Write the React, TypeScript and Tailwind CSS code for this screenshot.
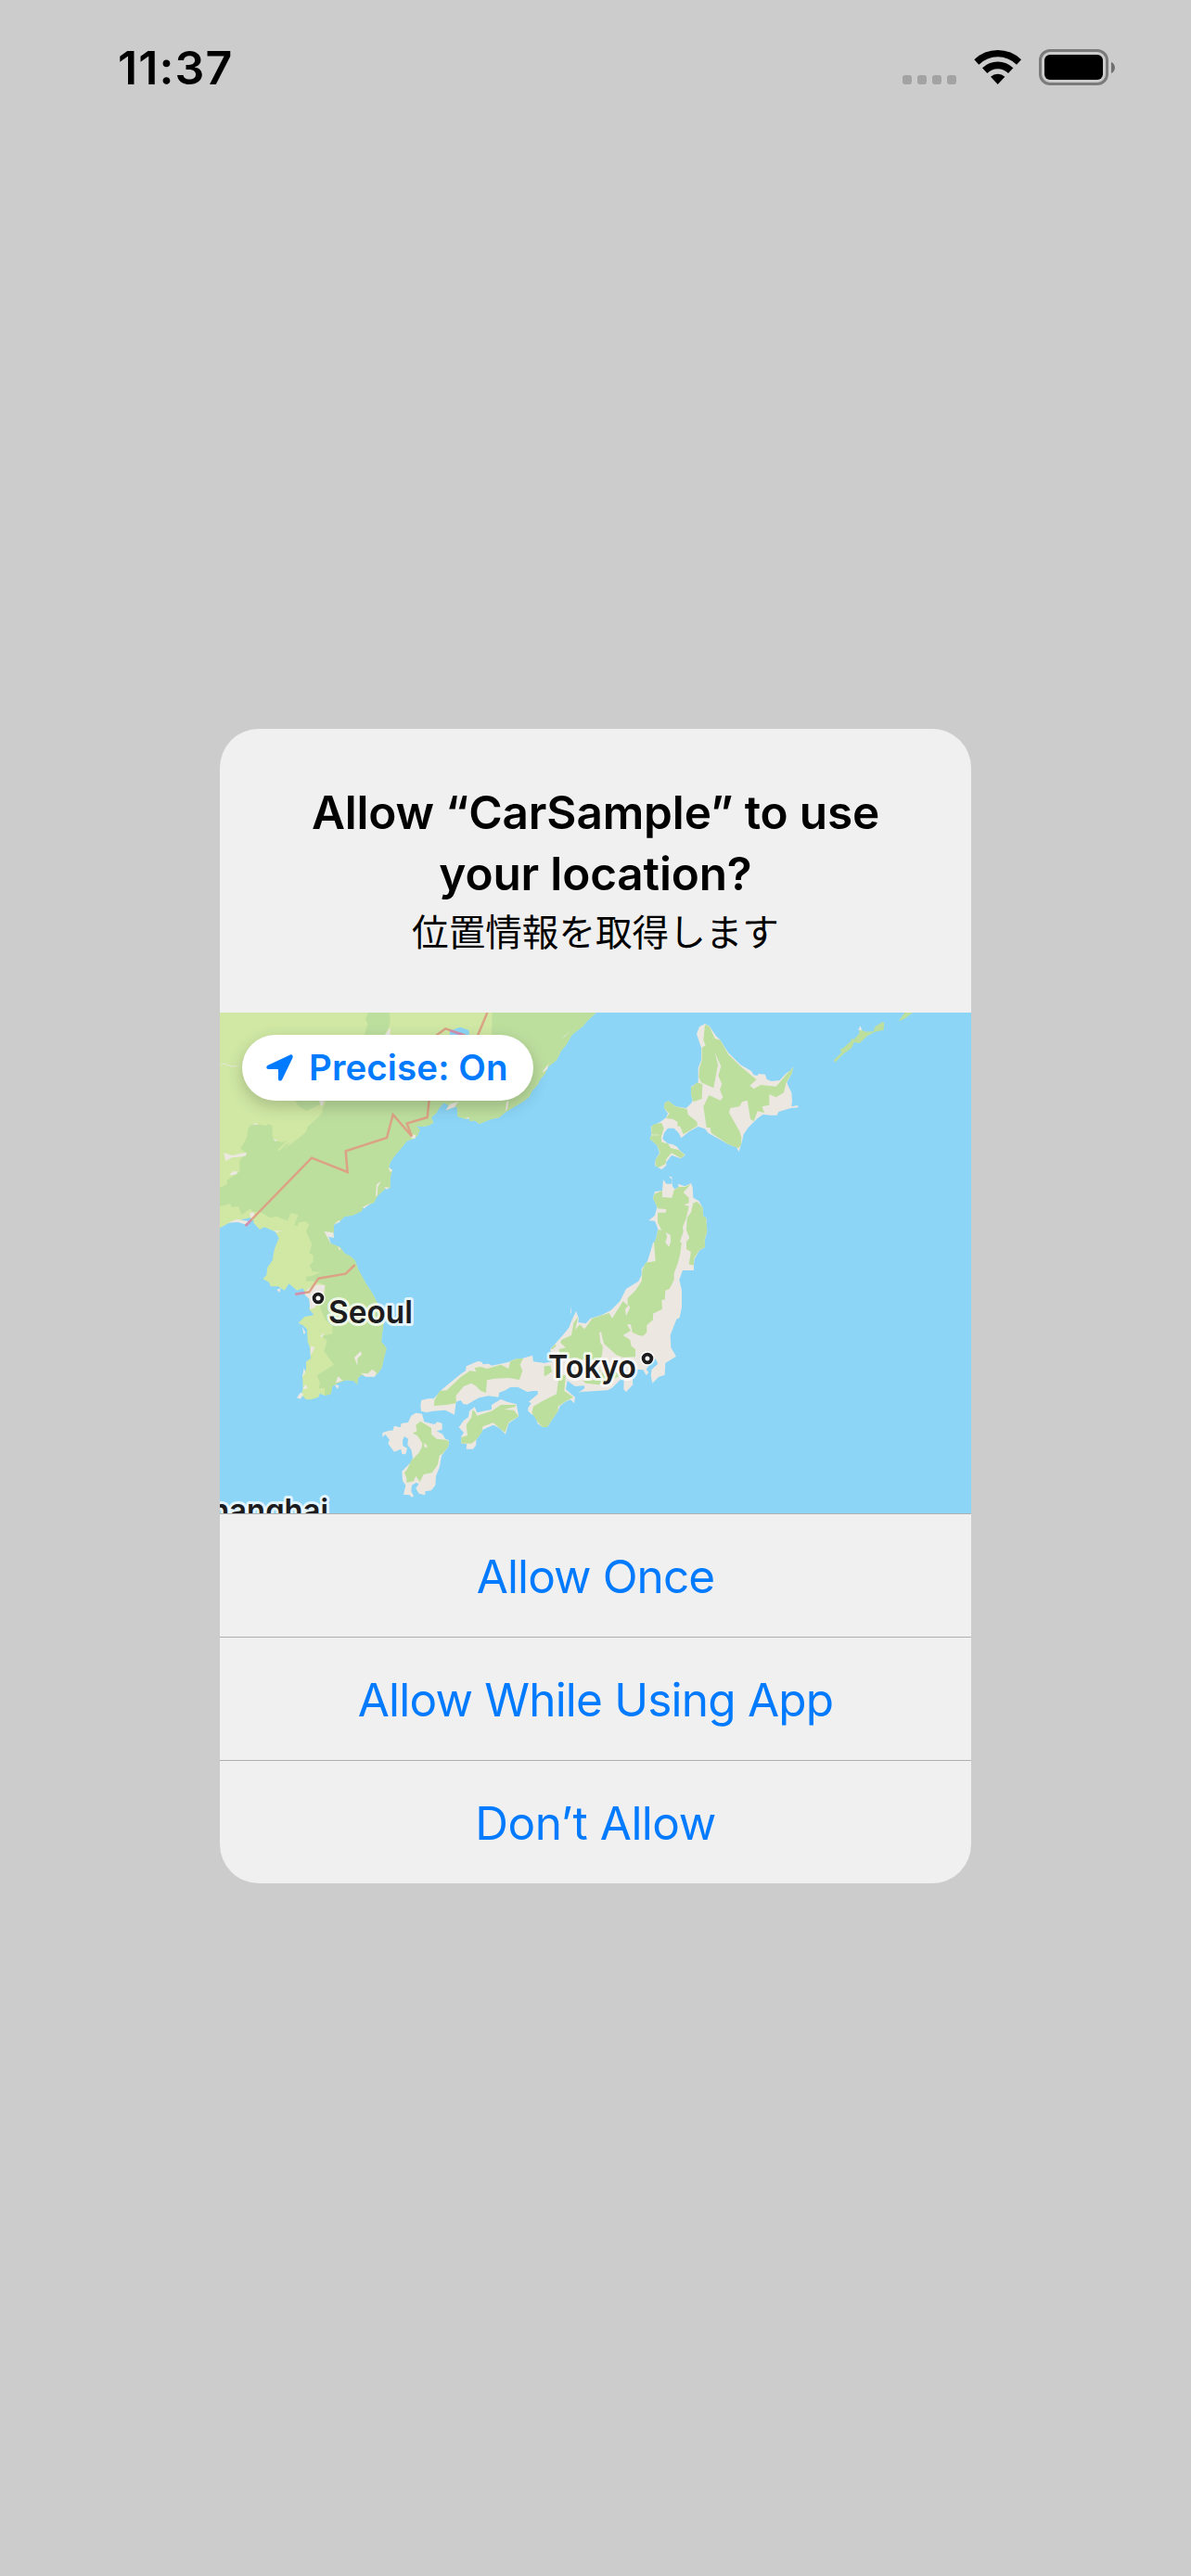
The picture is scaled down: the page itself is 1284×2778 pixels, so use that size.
import React from "react";

const INTER = "font-['Inter','Noto_Sans_CJK_JP',sans-serif]";

const FOREST = "#bddf9e";
const GRASS = "#d0e8a4";
const SAND = "#ece8e1";
const WATER = "#8cd5f7";
const BORDER = "#dba285";

function P({ d, fill }: { d: string; fill: string }) {
  return <polygon points={d} fill={fill} />;
}

function Continent() {
  return (
    <g transform="translate(230 1080) scale(0.33333)">
      <P
        fill={GRASS}
        d="0,30 1238,30 1238,36 1210,62 1195,80 1160,108 1140,142 1125,160 1110,190 1082,212 1072,235 1055,255 1050,268 1030,290 1022,308 1000,325 975,340 945,358 925,375 895,382 860,396 845,385 830,388 828,377 815,380 790,372 788,340 770,345 755,352 760,335 745,328 730,345 722,360 705,375 712,392 695,402 672,405 655,402 668,415 660,435 648,443 625,452 610,472 590,495 575,515 567,535 578,547 572,570 572,602 555,607 530,630 520,650 485,665 480,678 450,692 425,695 410,710 390,722 388,760 362,745 378,782 410,795 425,815 445,826 458,838 470,870 495,915 515,945 530,975 552,1010 550,1045 543,1100 560,1122 550,1160 545,1185 530,1205 520,1213 495,1213 478,1208 468,1218 465,1240 455,1228 430,1225 400,1235 385,1245 380,1270 360,1275 345,1268 340,1280 315,1288 300,1288 285,1272 290,1250 288,1210 300,1190 300,1165 315,1155 312,1120 305,1100 303,1060 290,1048 275,1040 295,1020 325,1015 310,995 315,970 300,950 290,928 270,935 245,913 230,935 210,922 185,922 180,908 160,898 172,885 175,860 193,835 192,830 198,800 212,765 200,745 165,730 150,738 120,705 90,712 60,712 21,733 0,733"
      />
      <P
        fill={FOREST}
        d="0,606 21,602 45,592 44,578 85,550 85,515 105,490 88,475 100,455 108,440 113,410 125,396 150,398 170,402 178,396 190,402 192,440 207,452 225,455 240,448 208,480 214,483 235,462 250,455 228,478 262,453 300,422 305,405 342,372 352,360 353,345 365,325 365,300 500,250 900,120 902,36 1238,36 1210,62 1195,80 1160,108 1140,142 1125,160 1110,190 1082,212 1072,235 1055,255 1050,268 1030,290 1022,308 1000,325 975,340 945,358 925,375 895,382 860,396 845,385 830,388 828,377 815,380 790,372 788,340 770,345 755,352 760,335 745,328 730,345 722,360 705,375 712,392 695,402 672,405 655,402 668,415 660,435 648,443 625,452 610,472 590,495 575,515 567,535 578,547 572,570 572,602 555,607 530,630 520,650 485,665 480,678 450,692 425,695 410,710 390,722 388,760 362,745 378,782 410,795 425,815 445,826 458,838 470,870 495,915 515,945 530,975 552,1010 550,1045 543,1100 560,1122 550,1160 545,1185 530,1205 520,1213 495,1213 478,1208 468,1218 465,1240 455,1228 430,1225 400,1235 385,1245 380,1270 360,1275 360,1250 340,1252 345,1235 335,1210 390,1175 358,1132 368,1098 350,1082 385,1075 385,1050 362,1030 345,990 362,940 360,918 330,905 300,905 300,890 318,888 348,876 320,874 303,835 310,815 318,785 300,745 310,720 290,712 285,735 262,722 275,690 250,684 240,710 205,695 185,700 150,680 128,682 120,670 92,690 80,662 60,666 55,655 21,663 0,663"
      />
      <P fill={GRASS} d="275,715 303,712 300,745 318,785 310,815 323,820 323,842 303,860 280,830 265,760" />
      <P fill={FOREST} d="500,36 570,36 572,70 557,108 488,108 500,72 492,58" />
      <P fill={FOREST} d="262,318 368,318 345,332 302,354 275,338" />
      <P fill={WATER} d="765,95 798,83 826,93 828,112 765,112" />
      <P fill={WATER} d="88,706 120,700 132,712 118,720" />
      <P fill={SAND} d="21,202 50,196 65,186 95,196 85,208 60,212 40,204" />
      <P fill={GRASS} d="21,198 50,192 65,184 95,194 90,206 60,209 40,202" />
      <P fill={SAND} d="34,490 62,498 108,488 104,500 60,505 40,517" />
      <P fill={SAND} d="52,562 62,550 82,550 72,560" />
      <P fill={SAND} d="572,84 572,108 554,108" />
      <P fill={SAND} d="342,322 360,322 350,340" />
      <P fill={SAND} d="752,352 765,332 792,324 780,342" />
      <P fill={SAND} d="122,398 140,394 145,398" />
      <P fill={SAND} d="192,444 208,449 200,452" />
      <P fill={SAND} d="48,716 75,704 118,712 106,722 80,714" />
      <P fill={SAND} d="118,684 132,682 132,700 120,700" />
      <P fill={SAND} d="640,430 655,432 652,445 640,442" />
      <P fill={SAND} d="358,744 388,748 390,765 376,762 372,758 382,786" />
      <P fill={SAND} d="195,742 222,742 205,748" />
      <P fill={SAND} d="525,628 528,592 542,582 532,600 530,630" />
      <P fill={SAND} d="553,600 570,602 560,608" />
      <P fill={SAND} d="566,536 580,546 572,552" />
      <P fill={SAND} d="815,378 828,374 826,380" />
      <P fill={SAND} d="945,356 948,326 955,320 952,345" />
      <P fill={SAND} d="1066,225 1084,202 1080,218 1066,230" />
      <P fill={SAND} d="1125,120 1155,95 1135,114" />
      <P fill={SAND} d="483,665 510,652 488,670" />
      <P fill={SAND} d="390,722 405,708 412,712" />
      <P fill={SAND} d="403,792 412,800 408,806" />
      <P fill={SAND} d="332,916 362,918 356,945 340,975 325,992 313,996 310,962 293,946 306,930" />
      <P fill={SAND} d="205,932 218,928 214,942" />
      <P fill={SAND} d="288,1052 298,1072 292,1076" />
      <P fill={SAND} d="345,1082 358,1072 352,1086" />
      <P fill={SAND} d="315,1115 328,1118 322,1132 314,1145" />
      <P fill={SAND} d="293,1185 298,1200 288,1215" />
      <P fill={SAND} d="298,1238 306,1252 288,1255" />
      <P fill={SAND} d="270,1282 282,1265 292,1270 282,1286" />
      <P fill={SAND} d="456,1152 476,1132 480,1142 466,1155 466,1178" />
      <P fill={SAND} d="478,1202 500,1204 514,1190 528,1202 522,1214 492,1214" />
      <P fill={SAND} d="403,1213 418,1226 396,1234" />
      <P fill={SAND} d="392,1240 406,1242 402,1254" />
      <g fill="none" stroke={BORDER} strokeWidth="7.5">
        <path d="M104 726 L318 506 L434 552 L428 484 L561 441 L581 366 L642 436 L626 395 L692 375 L700 300" />
        <path d="M715 114 L751 88 L850 122 L886 36" />
        <path d="M265 947 L310 940 L340 896 L428 881 L458 852" />
      </g>
      <g fill="none" stroke="#cf91b3" strokeWidth="7.5">
        <path d="M104 726 L122 708" />
        <path d="M765 94 L808 108" />
        <path d="M265 947 L296 942" />
      </g>
    </g>
  );
}

function NorthJapan() {
  return (
    <g transform="translate(670 1080) scale(0.33333)">
      <P
        fill={SAND}
        d="270,72 285,80 305,110 320,125 345,165 385,205 420,225 428,238 440,240 443,234 465,236 470,252 485,258 512,255 530,235 548,222 556,210 550,235 535,262 540,275 550,295 552,320 550,340 570,336 572,343 548,345 530,350 508,357 503,368 480,368 458,365 440,378 410,408 395,430 388,460 380,486 372,472 345,462 315,445 280,425 270,412 248,405 220,420 193,442 185,425 170,410 150,410 138,425 133,445 150,460 165,462 180,470 187,480 207,497 192,508 162,498 145,520 145,530 130,544 108,530 110,512 123,490 115,465 92,445 97,430 95,405 125,390 145,375 150,362 138,345 140,328 152,322 175,340 210,345 225,330 230,320 225,300 225,275 248,262 248,215 258,190 258,150 243,105 252,82"
      />
      <P
        fill={FOREST}
        d="270,74 285,82 302,120 320,125 345,170 385,210 437,253 415,272 428,283 450,270 500,275 512,262 530,240 556,212 550,235 533,262 525,295 500,310 478,300 478,335 455,340 462,360 440,355 428,388 417,380 407,320 390,325 382,340 352,345 348,360 382,420 388,440 387,465 378,475 345,462 290,425 287,408 275,408 265,340 283,303 320,320 328,310 318,285 325,268 313,240 322,210 302,165 312,205 298,280 258,262 250,245 252,215 260,190 260,150 272,142 265,125"
      />
      <P fill={FOREST} d="245,262 262,268 260,315 232,325 225,300 225,278" />
      <P fill={FOREST} d="152,322 175,340 212,348 215,365 245,390 245,403 200,430 190,405 180,402 182,390 165,380 145,378 155,362 138,345 140,328" />
      <P fill={FOREST} d="105,397 130,393 137,410 128,440 130,455 150,460 160,475 185,480 205,497 192,507 162,490 145,510 143,525 118,538 110,530 110,512 125,490 115,465 92,445 97,430 97,405" />
      <path d="M97 432 H122" stroke={SAND} strokeWidth="3" strokeDasharray="8 3" />
      <P fill={FOREST} d="690,198 687,190 712,165 707,155 718,150 742,128 745,120 752,123 768,105 770,90 790,98 815,97 820,82 845,66 850,70 848,92 820,98 795,112 770,135 752,132 745,150 720,168" />
      <P fill={SAND} d="766,92 773,78 777,94" />
      <P fill={FOREST} d="896,64 916,36 942,36 915,56" />
      <P
        fill={SAND}
        d="135,576 145,590 163,590 163,575 153,566 163,567 165,598 172,607 185,600 182,590 205,598 225,588 230,600 232,635 250,645 262,665 265,695 274,700 277,745 270,770 270,795 252,805 235,835 233,870 65,870 85,838 98,795 112,768 118,735 108,710 88,709 108,692 115,665 102,635 108,615 132,612"
      />
      <P
        fill={FOREST}
        d="132,612 132,633 163,635 170,610 185,600 205,600 225,590 200,618 218,635 218,652 202,658 218,662 212,690 208,705 198,730 200,745 190,775 192,805 195,810 182,840 182,872 65,872 85,840 108,840 108,805 100,790 112,768 118,738 140,742 148,760 142,780 152,797 160,785 158,755 130,740 117,715 117,683 143,683 145,672 117,670 102,635 108,622"
      />
      <P fill={FOREST} d="225,682 232,652 245,648 262,665 265,695 274,700 277,745 270,765 268,795 252,803 235,835 233,852 217,850 218,825 228,803 208,803 208,780 220,765 210,740 212,700" />
    </g>
  );
}

function CentralJapan() {
  return (
    <g transform="translate(560 1340) scale(0.33333)">
      <P
        fill={SAND}
        d="432,0 600,0 600,15 582,25 565,55 563,90 528,90 517,120 525,155 525,210 518,243 508,248 488,300 490,340 507,368 472,390 470,428 450,435 430,455 425,430 428,410 448,392 440,376 418,398 410,410 418,420 410,430 400,412 378,410 365,430 367,460 345,483 337,475 338,445 325,445 300,470 285,478 200,483 190,487 210,472 210,463 180,465 155,447 150,475 180,500 177,520 165,508 148,515 130,530 125,545 108,570 90,597 75,597 58,585 52,560 38,555 28,545 28,535 38,520 30,515 60,490 58,478 25,483 -10,465 -10,380 40,366 45,388 80,390 105,385 100,345 140,300 160,275 170,250 183,222 192,245 190,258 215,262 230,245 265,235 295,220 325,190 345,150 385,125 395,105 395,85 420,55"
      />
      <P
        fill={FOREST}
        d="435,0 440,60 408,65 397,90 395,125 375,155 350,180 350,200 358,210 345,238 342,215 352,205 335,190 300,245 290,228 235,245 220,268 210,280 196,265 180,282 190,240 175,260 168,300 135,315 133,325 150,340 128,345 130,365 165,375 220,380 260,385 275,340 262,325 258,288 275,330 310,365 330,372 375,370 375,345 362,335 358,315 335,300 360,285 348,265 360,265 365,290 385,300 400,302 412,290 412,268 432,250 432,230 462,215 460,185 470,185 472,155 485,150 500,120 500,100 513,65 520,35 525,0"
      />
      <P fill={FOREST} d="540,0 600,0 600,15 582,25 565,50 563,74 548,70 555,30 540,22" />
      <P fill={FOREST} d="102,342 115,330 120,334 106,346" />
      <P fill={FOREST} d="128,430 150,430 145,480 175,500 150,513 125,530 125,545 108,570 90,597 75,597 58,580 40,550 45,530 70,515 120,490" />
      <P fill={FOREST} d="258,410 285,440 280,400 330,430 305,440 255,460 215,455 205,448 240,445 255,440" />
      <P fill={FOREST} d="48,402 100,398 105,418 82,433 55,422" />
      <path d="M262 290 L272 340 L262 440" fill="none" stroke={SAND} strokeWidth="5" />
      <path d="M274 332 L312 366 L335 375" fill="none" stroke={SAND} strokeWidth="6" />
      <P fill={SAND} d="166,205 168,225 165,232" />
      <P fill={SAND} d="472,0 488,0 484,14" />
    </g>
  );
}

function WestJapan() {
  return (
    <g transform="translate(400 1400) scale(0.33333)">
      <P
        fill={SAND}
        d="500,283 480,287 450,288 435,298 415,305 412,320 380,316 350,322 310,344 298,342 290,330 275,335 270,377 240,362 200,365 180,370 162,365 160,345 163,330 185,325 203,325 230,295 260,270 290,245 306,235 308,220 345,204 358,206 362,214 380,212 390,218 420,212 445,206 465,197 490,195 508,194 522,185 525,205 560,210 560,300 500,300"
      />
      <P
        fill={FOREST}
        d="204,348 205,330 222,300 245,298 290,255 320,235 340,238 335,225 355,222 375,228 420,215 445,228 450,205 470,196 492,195 482,215 490,235 480,264 445,258 400,260 375,265 372,306 355,300 340,285 325,275 300,285 275,315 275,340 245,345"
      />
      <P
        fill={SAND}
        d="335,352 343,370 390,360 390,345 420,327 440,335 470,343 478,382 445,405 435,440 415,420 395,410 362,425 340,460 340,475 330,488 308,488 310,472 292,470 292,447 300,435 284,418 300,395 315,385 318,365"
      />
      <P
        fill={FOREST}
        d="328,362 335,365 343,380 390,365 420,345 470,345 465,352 430,360 462,362 478,382 445,402 433,435 395,403 362,415 358,435 340,458 325,470 292,470 292,450 312,444 308,410 325,385"
      />
      <P
        fill={SAND}
        d="145,371 165,374 172,400 205,408 215,400 230,405 230,425 212,430 232,440 240,455 252,460 250,480 228,510 222,545 210,575 208,605 195,622 175,625 175,637 155,632 145,615 155,600 145,597 132,605 130,625 138,640 132,644 125,637 105,635 112,605 102,590 100,560 110,550 130,530 135,515 130,490 118,475 120,455 108,447 102,460 103,478 117,485 112,505 100,504 97,488 75,497 55,470 60,458 46,440 37,450 37,435 60,428 70,428 75,413 95,418 98,405 120,402 130,380"
      />
      <P
        fill={FOREST}
        d="160,398 195,420 195,440 212,455 240,458 252,462 250,480 230,505 222,508 215,540 197,565 170,570 158,595 145,575 138,592 115,597 115,582 108,565 118,552 130,525 155,500 165,480 165,468 150,445 135,437 148,430 145,410"
      />
      <P fill={SAND} d="172,468 182,478 180,485 172,480" />
    </g>
  );
}

function MapView() {
  return (
    <svg viewBox="237 1092 810 540" className="block h-[540px] w-[810px]">
      <rect x="237" y="1092" width="810" height="540" fill={WATER} />
      <Continent />
      <NorthJapan />
      <CentralJapan />
      <WestJapan />
      <g fill="#fff" stroke="#fff" strokeWidth="9" strokeOpacity="0.7">
        <circle cx="343" cy="1400" r="3.5" />
        <circle cx="698" cy="1465" r="3.5" />
      </g>
      <g fill="#fff" stroke="#1c1c1e" strokeWidth="3.8">
        <circle cx="343" cy="1400" r="4.4" />
        <circle cx="698" cy="1465" r="4.4" />
      </g>
      <g
        className="font-['Inter',sans-serif] text-[34px] font-semibold [paint-order:stroke]"
        fill="#1c1c1e"
        stroke="#fff"
        strokeOpacity="0.75"
        strokeWidth="6"
        strokeLinejoin="round"
      >
        <text x="354" y="1427.3" textLength="91" lengthAdjust="spacingAndGlyphs">Seoul</text>
        <text x="591" y="1485.7" textLength="95" lengthAdjust="spacingAndGlyphs">Tokyo</text>
        <text x="354" y="1641.3" textAnchor="end" textLength="148" lengthAdjust="spacingAndGlyphs">Shanghai</text>
      </g>
    </svg>
  );
}

function StatusBar() {
  return (
    <div className="flex h-[141px] items-start justify-between pl-[127px] pr-[82px]">
      <div className="mt-[43px] text-[50px] font-semibold leading-[60px] tracking-[1.1px] text-black">11:37</div>
      <div className="mt-[53px] flex">
        <div className="mt-[28px] flex gap-[6px]">
          {[0, 1, 2, 3].map((i) => (
            <span key={i} className="size-[10px] rounded-[3px] bg-[#a3a3a3]" />
          ))}
        </div>
        <svg viewBox="300 69 153 117" className="ml-[19px] h-[39px] w-[51px]">
          <path d="M301 103 A108 108 0 0 1 453 103 L438 119 A87 87 0 0 0 316 119 Z" />
          <path d="M327 130 A71 71 0 0 1 427 130 L411 147 A48 48 0 0 0 343 147 Z" />
          <path d="M354 158 A34 34 0 0 1 400 158 L377 183 Z" />
        </svg>
        <div className="ml-[19px] h-[39px] w-[75px] rounded-[12px] border-[3px] border-[#7b7b7b] p-[3px]">
          <div className="h-full w-full rounded-[6px] bg-black" />
        </div>
        <svg viewBox="0 0 4 12" className="ml-[3px] mt-[13.5px] h-[12px] w-[4px]">
          <path d="M0 0 C5.3 2.2 5.3 9.8 0 12 Z" fill="#6f6f6f" />
        </svg>
      </div>
    </div>
  );
}

function Action({ label, spacing }: { label: string; spacing: string }) {
  return (
    <button
      className={`flex h-[133px] w-full items-center justify-center border-t border-[#b0b0b2] pt-[2px] text-[49.5px] leading-[66px] text-[#007aff] ${spacing}`}
    >
      {label}
    </button>
  );
}

export default function App() {
  return (
    <div className={`flex h-[2778px] w-[1284px] flex-col overflow-hidden bg-[#cccccc] ${INTER}`}>
      <StatusBar />
      <div className="mx-auto mt-[645px] flex w-[810px] flex-col overflow-hidden rounded-[42px] bg-[#f0f0f0]">
        <div className="flex h-[306px] flex-col items-center pt-[57px] text-center text-black">
          <h1 className="text-[49.5px] font-semibold leading-[66px]">
            <span className="block whitespace-nowrap tracking-[-0.15px]">Allow “CarSample” to use</span>
            <span className="block whitespace-nowrap tracking-[-0.15px]">your location?</span>
          </h1>
          <p className="-mt-[2px] font-['Noto_Sans_CJK_JP',sans-serif] text-[39.6px] leading-[60px]">位置情報を取得します</p>
        </div>
        <div className="relative h-[540px]">
          <MapView />
          <div className="absolute left-[24px] top-[24px] flex h-[71px] w-[314px] items-center rounded-full bg-white pl-[26px] text-[#007aff] shadow-[0_6px_18px_rgba(0,0,0,0.2)]">
            <svg viewBox="170 170 89 89" className="size-[29px]">
              <path
                fill="currentColor"
                d="M248 172 C255 169 260 174 257 182 L223 253 C219 260 210 259 210 251 L210 222 Q210 219 207 219 L178 219 C170 219 168 210 176 206 Z"
              />
            </svg>
            <span className="-mt-[1px] ml-[17px] whitespace-nowrap text-[38.5px] font-semibold leading-[46px] tracking-[0.1px]">
              Precise: On
            </span>
          </div>
        </div>
        <Action label="Allow Once" spacing="tracking-[-0.9px]" />
        <Action label="Allow While Using App" spacing="tracking-[-0.8px]" />
        <Action label="Don’t Allow" spacing="tracking-[-0.5px]" />
      </div>
    </div>
  );
}
